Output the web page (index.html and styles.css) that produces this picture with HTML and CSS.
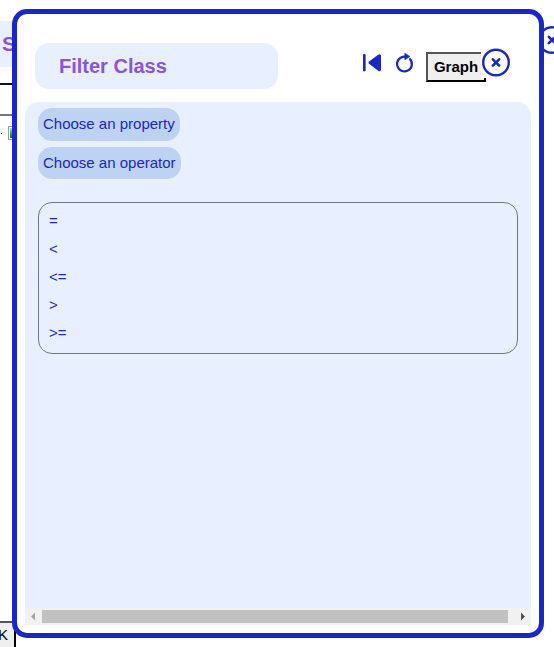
FILE: index.html
```html
<!DOCTYPE html>
<html lang="en">
<head>
<meta charset="utf-8">
<title>Filter Class</title>
<link rel="stylesheet" href="styles.css">
</head>
<body>
<svg width="0" height="0" class="defs">
  <symbol id="close" viewBox="0 0 28 28">
    <circle cx="14" cy="14" r="12.8" fill="#fff" stroke="#1a27c4" stroke-width="2.4"/>
    <path d="M10.8 10.8l6.4 6.4M17.2 10.8l-6.4 6.4" fill="none" stroke="#1a27c4" stroke-width="2.6" stroke-linecap="round"/>
  </symbol>
</svg>
<main class="page">
  <div class="page-head">
    <h1 class="page-title">S</h1>
    <svg class="page-close"><use href="#close"/></svg>
  </div>
  <div class="rule-dark"></div>
  <div class="rule-gray"></div>
  <div class="tree-row"><span class="dot"></span><span class="thumb-frame"><i></i></span></div>
  <button class="ok">K</button>
</main>
<section class="dialog">
  <header class="head">
    <h2 class="title">Filter Class</h2>
    <div class="tools">
      <svg class="first" viewBox="0 0 20 20"><path d="M1.5 1.5h1.600v16.400H1.500z" fill="#1a27c4" stroke="#1a27c4" stroke-linejoin="round"/><path d="M7 8.600 16.200 1.700Q19 .2 19 3v13.400q0 2.800-2.800 1.300L7 10.800q-1.200-1.100 0-2.200z" fill="#1a27c4"/></svg>
      <svg class="reload" viewBox="0 0 20 22"><path d="M10.500 4.600H9.300a7.400 7.400 0 1 0 5.800 2.600" fill="none" stroke="#1a27c4" stroke-width="2.200" stroke-linecap="round"/><path d="M9.800 1.200v6.600l5.200-3.200z" fill="#1a27c4" stroke="#1a27c4" stroke-width=".6" stroke-linejoin="round"/></svg>
      <button class="graph">Graph</button>
      <span class="close"><svg><use href="#close"/></svg></span>
    </div>
  </header>
  <div class="panel">
    <div class="content">
      <div class="chip">Choose an property</div>
      <div class="chip operator">Choose an operator</div>
      <ul class="list">
        <li>=</li><li>&lt;</li><li>&lt;=</li><li>&gt;</li><li>&gt;=</li>
      </ul>
    </div>
    <div class="scrollbar">
      <svg class="arrow" viewBox="0 0 17 17"><path d="M10 4.500v8L6 8.500z" fill="#a3a3a3"/></svg>
      <div class="track-thumb"></div>
      <svg class="arrow right" viewBox="0 0 17 17"><path d="M7 4.500v8l4-4z" fill="#505050"/></svg>
    </div>
  </div>
</section>
</body>
</html>
```
FILE: styles.css
```css
* { box-sizing: border-box; }
html, body { margin: 0; height: 100%; overflow: hidden; }
body { background: #fff; font-family: "Liberation Sans", Arial, sans-serif; color: #1a27c4; }
.defs { position: absolute; }
.page { height: 647px; display: flex; flex-direction: column; align-items: flex-start; }
.page-head { display: flex; justify-content: space-between; width: 566px; margin-top: 21px; }
.page-title { margin: 0; width: 200px; height: 46px; padding-left: 2px; background: #e8f0ff; color: #8855dc; font-size: 21px; line-height: 46px; }
.page-close { width: 28px; height: 28px; margin-top: 5px; }
.rule-dark { width: 300px; height: 2px; margin-top: 16px; background: #111; }
.rule-gray { width: 300px; height: 2px; margin-top: 29px; background: #767676; }
.tree-row { display: flex; margin-top: 10px; }
.dot { width: 1px; height: 1px; margin: 7px 6px 0 1px; background: #222; }
.thumb-frame { width: 16px; height: 14px; padding: 1px; border: 1px solid #999; background: #fff; }
.thumb-frame i { display: block; height: 10px; background: linear-gradient(#b9dcb4, #35a832 55%, #137a19); }
.ok { width: 16px; height: 34px; margin: auto 0 -8px 0; padding: 0 5px 8px 0; border: 2px solid; border-width: 2px 2px 2px 0; border-color: #555 #000 #000; background: #efefef; color: #000; font: 15px "Liberation Sans", Arial, sans-serif; text-align: left; text-indent: -2px; }
.dialog { position: absolute; top: 9px; left: 12px; width: 532px; height: 629px; padding: 29px 8px 8px; border: 5px solid #1a27c4; border-radius: 15px; background: #fff; display: flex; flex-direction: column; }
.head { display: flex; justify-content: space-between; height: 59px; padding: 0 21px 0 10px; }
.title { width: 243px; height: 46px; margin: 0; padding-left: 24px; border-radius: 14px; background: #e8f0ff; color: #8855dc; font-size: 20px; line-height: 46px; }
.tools { display: flex; align-items: flex-start; }
.first { width: 20px; height: 20px; margin: 10px 13px 0 0; }
.reload { width: 20px; height: 22px; margin: 9px 11px 0 0; }
.graph { width: 60px; height: 30px; margin-top: 9px; padding: 0 0 2px; border: 2px solid; border-color: #555 #000 #000 #555; background: #efefef; color: #000; font: bold 15px "Liberation Sans", Arial, sans-serif; }
.close { z-index: 1; margin: 5px 0 0 -5px; height: 30px; padding: 0 0 0 1px; background: #fff; }
.close svg { display: block; width: 28px; height: 29px; }
.panel { flex: 1; display: flex; flex-direction: column; border-radius: 14px 14px 0 0; background: #e8f0ff; overflow: hidden; }
.content { flex: 1; display: flex; flex-direction: column; align-items: flex-start; padding: 6px 13px; }
.chip { width: 142px; height: 33px; padding-left: 5px; border-radius: 14px; background: #bed3f4; font-size: 15px; line-height: 32px; white-space: nowrap; }
.operator { width: 143px; height: 32px; margin-top: 6px; }
.list { width: 480px; height: 152px; margin: 23px 0 0; padding: 4px 10px; border: 1px solid #767676; border-radius: 14px; list-style: none; font-size: 15px; line-height: 28px; }
.scrollbar { display: flex; align-items: center; height: 17px; background: #f1f1f1; }
.arrow { width: 17px; height: 17px; }
.track-thumb { width: 466px; height: 13px; background: #c1c1c1; }
.right { margin-left: auto; }
```
